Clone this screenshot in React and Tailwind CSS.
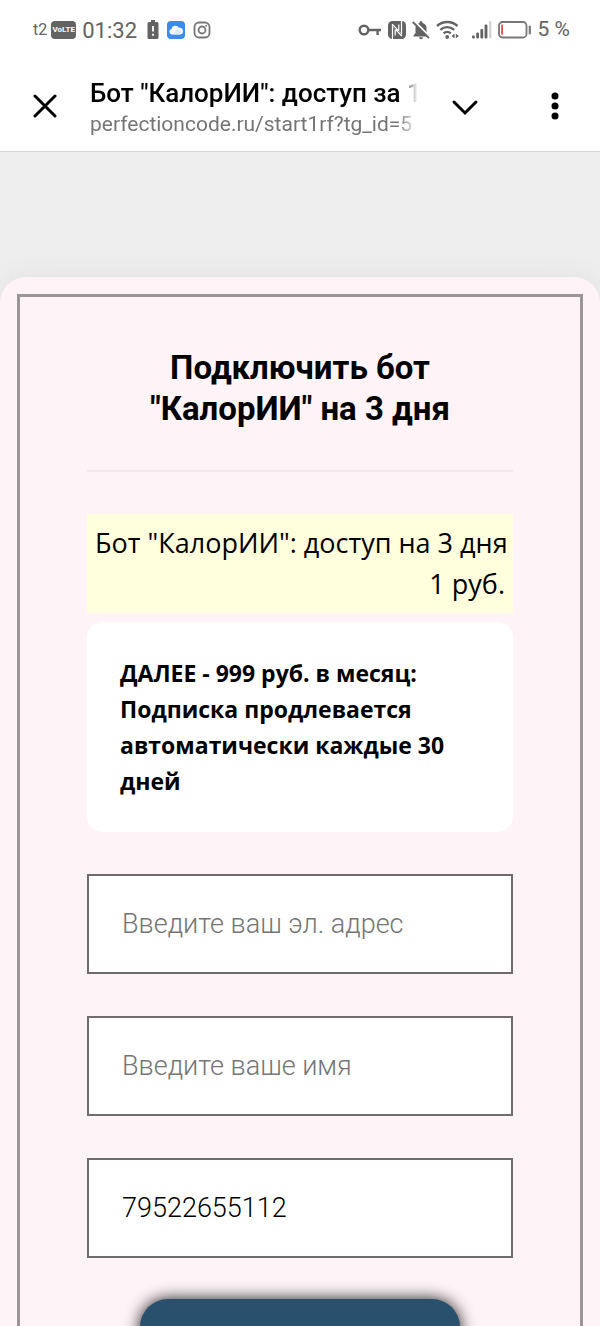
import { useState } from 'react'

const FIELDS = [
  { id: 'email', type: 'email', placeholder: 'Введите ваш эл. адрес' },
  { id: 'name', type: 'text', placeholder: 'Введите ваше имя' },
  { id: 'phone', type: 'tel', placeholder: 'Введите ваш телефон' },
]

function BatteryAlertIcon() {
  return (
    <svg className="h-5 w-3" viewBox="0 0 12 20" fill="#636363">
      <path d="M4 0h4v2h2a1.500 1.500 0 0 1 1.500 1.500v14A1.500 1.500 0 0 1 10 19H2a1.500 1.500 0 0 1-1.500-1.500v-14A1.500 1.500 0 0 1 2 2h2z" />
      <path d="M6 6v5.500M6 13.800v2" stroke="#fff" strokeWidth="1.800" />
    </svg>
  )
}

function CloudIcon() {
  return (
    <svg className="size-[18px]" viewBox="0 0 18 18">
      <rect width="18" height="18" rx="4" fill="#3d8bea" />
      <path d="M4.800 13.500a2.800 2.800 0 0 1-.3-5.500 4 4 0 0 1 7.400-1.200 3.400 3.400 0 0 1 1.300 6.700z" fill="#fff" />
      <path d="M7 13.500a4.500 4.500 0 0 1 5-5 3 3 0 0 1 1.200 5z" fill="#dcebff" />
    </svg>
  )
}

function InstagramIcon() {
  return (
    <svg className="size-[18px]" viewBox="0 0 18 18" fill="none" stroke="#777" strokeWidth="1.800">
      <rect x="1.500" y="1.500" width="15" height="15" rx="4.500" />
      <circle cx="9" cy="9" r="3.500" />
      <circle cx="13.200" cy="4.800" r="1" fill="#777" stroke="none" />
    </svg>
  )
}

function KeyIcon() {
  return (
    <svg className="h-4 w-6" viewBox="0 0 24 16" fill="none" stroke="#636363" strokeWidth="2.400">
      <circle cx="6" cy="8" r="4.300" />
      <path d="M10.300 8H23M19.600 8v5" />
    </svg>
  )
}

function NfcIcon() {
  return (
    <svg className="h-5 w-[18px]" viewBox="0 0 18 20">
      <rect x="0" y="1" width="18" height="18" rx="4.500" fill="#636363" />
      <path d="M4.500 19V5.500l9 9V1" fill="none" stroke="#fff" strokeWidth="1.200" />
      <path d="M7.200 15.500V9.500M10.800 4.500v6" fill="none" stroke="#fff" strokeWidth="1.200" />
      <path d="m5 5.500 8 9.500" fill="none" stroke="#636363" strokeWidth="1.600" />
      <path d="m4.200 4.200 6.400 6.600M7.400 9.400l6.400 6.600" fill="none" stroke="#fff" strokeWidth="1.200" />
    </svg>
  )
}

function BellOffIcon() {
  return (
    <svg className="h-5 w-[18px]" viewBox="0 0 18 20">
      <path d="M9 1a1.500 1.500 0 0 1 1.500 1.500v.6A5.200 5.200 0 0 1 14.500 8v5l2 2.500v1h-15v-1l2-2.500V8a5.200 5.200 0 0 1 4-4.900v-.6A1.500 1.500 0 0 1 9 1zM7 17.300h4a2 2 0 0 1-4 0z" fill="#636363" />
      <path d="M2.200 1 18.200 17" stroke="#fff" strokeWidth="1.800" />
      <path d="M.8 2 17 18.200" stroke="#636363" strokeWidth="1.800" />
    </svg>
  )
}

function WifiIcon() {
  return (
    <svg className="h-5 w-6" viewBox="0 0 24 20" fill="none" stroke="#636363" strokeWidth="2.400">
      <path d="M1 6a15 15 0 0 1 20.500 0M4.300 9.800a10.200 10.200 0 0 1 13.800 0M7.600 13.400a5.500 5.500 0 0 1 7.200 0" />
      <circle cx="11.200" cy="17" r="1.900" fill="#636363" stroke="none" />
      <path d="m18.500 13.500-3 2.500 3 2.500zM19.800 13.500l3 2.500-3 2.500z" fill="#636363" stroke="none" />
    </svg>
  )
}

function SignalIcon() {
  return (
    <svg className="h-5 w-5" viewBox="0 0 20 20" fill="#636363">
      <rect x="0" y="15.500" width="2.800" height="3" rx="1" />
      <rect x="4.200" y="12.500" width="2.800" height="6" rx="1" />
      <rect x="8.400" y="9" width="2.800" height="9.500" rx="1" />
      <rect x="12.600" y="4.500" width="2.800" height="14" rx="1" />
      <rect x="17" y="1" width="2.400" height="17.500" rx="1" fill="#d4d4d4" />
    </svg>
  )
}

function BatteryIcon() {
  return (
    <svg className="h-5 w-[34px]" viewBox="0 0 34 20">
      <rect x="1" y="2" width="27.500" height="15.500" rx="3.500" fill="none" stroke="#777" strokeWidth="1.800" />
      <rect x="3.200" y="4.500" width="1.800" height="10.500" rx=".8" fill="#e0524d" />
      <path d="M31.800 6.500v7" stroke="#777" strokeWidth="2.200" strokeLinecap="round" />
    </svg>
  )
}

function StatusBar() {
  return (
    <div className="flex h-[60px] flex-none items-center justify-between pr-[30px] pl-[33px] text-[#636363]">
      <div className="flex items-center">
        <span className="text-base">t2</span>
        <span className="ml-1 flex h-[18px] w-[25px] items-center justify-center rounded bg-[#636363] text-[8px] font-bold text-white">
          VoLTE
        </span>
        <span className="ml-1.5 text-[22px]">01:32</span>
        <div className="ml-2.5 flex items-center gap-2">
          <BatteryAlertIcon />
          <CloudIcon />
          <InstagramIcon />
        </div>
      </div>
      <div className="flex items-center">
        <div className="flex items-center gap-1.5">
          <KeyIcon />
          <NfcIcon />
          <BellOffIcon />
          <WifiIcon />
        </div>
        <div className="ml-3 flex items-center gap-1.5">
          <SignalIcon />
          <BatteryIcon />
          <span className="text-[21px]">5 %</span>
        </div>
      </div>
    </div>
  )
}

function BrowserBar() {
  return (
    <header className="flex h-[92px] flex-none items-center border-b border-[#d5d5d5]">
      <button aria-label="Закрыть" className="flex w-[90px] flex-none justify-center">
        <svg className="size-6" viewBox="0 0 24 24" fill="none" stroke="#000" strokeWidth="3" strokeLinecap="round">
          <path d="m2 2 20 20M22 2 2 22" />
        </svg>
      </button>
      <div className="min-w-0 flex-1 overflow-hidden pt-1 whitespace-nowrap [mask-image:linear-gradient(to_right,#000_calc(100%-22px),transparent_calc(100%-2px))]">
        <div className="text-[26px] leading-8 font-medium text-black">Бот "КалорИИ": доступ за 1</div>
        <div className="text-[21px] leading-[30px] text-[#757575]">perfectioncode.ru/start1rf?tg_id=5</div>
      </div>
      <button aria-label="Свернуть" className="flex w-[90px] flex-none justify-center">
        <svg className="size-7" viewBox="0 0 28 28" fill="none" stroke="#000" strokeWidth="3" strokeLinecap="round">
          <path d="m3 10 11 11 11-11" />
        </svg>
      </button>
      <button aria-label="Меню" className="flex w-[90px] flex-none justify-center">
        <svg className="h-7 w-2" viewBox="0 0 8 28">
          <circle cx="4" cy="4" r="3.500" />
          <circle cx="4" cy="14" r="3.500" />
          <circle cx="4" cy="24" r="3.500" />
        </svg>
      </button>
    </header>
  )
}

export default function App() {
  const [values, setValues] = useState({ email: '', name: '', phone: '79522655112' })

  return (
    <div className="flex h-screen flex-col bg-white font-[Roboto,sans-serif]">
      <StatusBar />
      <BrowserBar />

      <main className="min-h-0 flex-1 overflow-y-auto bg-[#eeeeee] pt-[125px] [scrollbar-width:none]">
        <div className="rounded-[26px] bg-[#fef3f7] p-[17px] shadow-[0_0_30px_rgba(0,0,0,0.06)]">
          <form
            onSubmit={e => e.preventDefault()}
            className="border-3 border-[#9b9598] px-[67px] pt-[50px] pb-16"
          >
            <h1 className="text-center text-[33px] leading-[41px] font-bold text-black">
              Подключить бот "КалорИИ" на 3 дня
            </h1>
            <hr className="mt-[41px] border-t-2 border-[#f3e8ec]" />

            <div className="mt-[42px] bg-[#ffffdd] px-2 pt-2 pb-[9px] font-['Open_Sans',sans-serif] text-[27px] leading-[41px] text-black">
              <p className="whitespace-nowrap">Бот "КалорИИ": доступ на 3 дня</p>
              <p className="text-right">1 руб.</p>
            </div>

            <div className="mt-[9px] rounded-2xl bg-white p-[33px] font-['Open_Sans',sans-serif] text-[23px] leading-9 font-bold text-black">
              ДАЛЕЕ - 999 руб. в месяц: Подписка продлевается автоматически каждые 30 дней
            </div>

            <div className="mt-[42px] flex flex-col gap-[42px]">
              {FIELDS.map(f => (
                <input
                  key={f.id}
                  id={f.id}
                  type={f.type}
                  aria-label={f.placeholder}
                  placeholder={f.placeholder}
                  value={values[f.id]}
                  onChange={e => setValues({ ...values, [f.id]: e.target.value })}
                  className="h-[100px] w-full border-2 border-[#706c6e] bg-white px-[33px] text-[27px] font-light text-black placeholder:text-[#757575]"
                />
              ))}
            </div>

            <button
              type="submit"
              aria-label="Подключить"
              className="mx-auto mt-[41px] block h-[100px] w-3/4 rounded-[28px] bg-[#29506d] shadow-[0_0_16px_rgba(0,0,0,0.9)]"
            />
          </form>
        </div>
      </main>
    </div>
  )
}
